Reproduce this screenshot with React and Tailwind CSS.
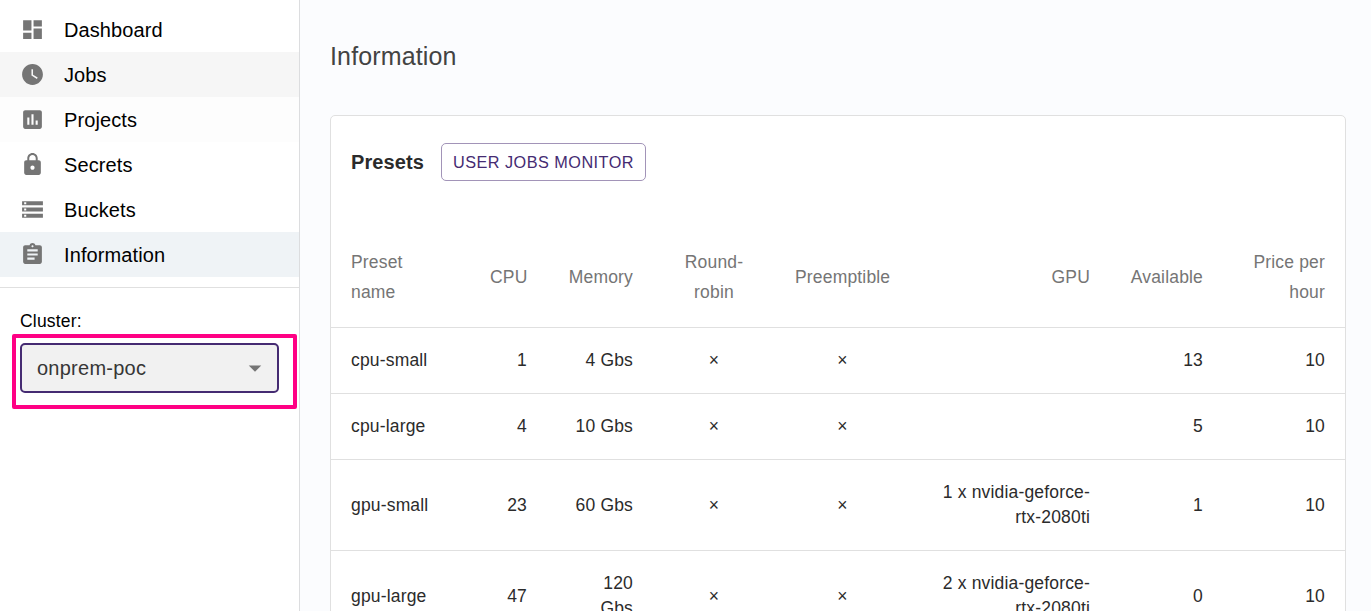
import React from "react";
import {
  MdDashboard,
  MdWatchLater,
  MdAssessment,
  MdLock,
  MdStorage,
  MdAssignment,
  MdArrowDropDown,
} from "react-icons/md";

const navItems = [
  { label: "Dashboard", Icon: MdDashboard, bg: "bg-white" },
  { label: "Jobs", Icon: MdWatchLater, bg: "bg-[#f6f6f6]" },
  { label: "Projects", Icon: MdAssessment, bg: "bg-[#fdfdfd]" },
  { label: "Secrets", Icon: MdLock, bg: "bg-white" },
  { label: "Buckets", Icon: MdStorage, bg: "bg-white" },
  { label: "Information", Icon: MdAssignment, bg: "bg-[#eff3f6]" },
];

const columns = [
  { label: "Preset name", width: "w-[139px]", align: "text-left" },
  { label: "CPU", width: "w-[77px]", align: "text-right" },
  { label: "Memory", width: "w-[106px]", align: "text-right" },
  { label: "Round-robin", width: "w-[122px]", align: "text-center" },
  { label: "Preemptible", width: "w-[135px]", align: "text-center" },
  { label: "GPU", width: "w-[200px]", align: "text-right" },
  { label: "Available", width: "w-[113px]", align: "text-right" },
  { label: "Price per hour", width: "w-[122px]", align: "text-right" },
];

const rows = [
  ["cpu-small", "1", "4 Gbs", "×", "×", "", "13", "10"],
  ["cpu-large", "4", "10 Gbs", "×", "×", "", "5", "10"],
  ["gpu-small", "23", "60 Gbs", "×", "×", "1 x nvidia-geforce-rtx-2080ti", "1", "10"],
  ["gpu-large", "47", "120 Gbs", "×", "×", "2 x nvidia-geforce-rtx-2080ti", "0", "10"],
];

function Sidebar() {
  return (
    <aside className="flex w-[300px] shrink-0 flex-col border-r border-[#dcdddf] bg-white">
      <nav className="border-b border-[#e0e0e0] pt-[7px] pb-[10px]">
        {navItems.map(({ label, Icon, bg }) => (
          <a key={label} className={`flex h-[45px] items-center gap-[19px] pl-5 text-xl text-black ${bg}`}>
            <Icon className="size-[25px] text-[#757575]" />
            <span className="tracking-[0.1px]">{label}</span>
          </a>
        ))}
      </nav>
      <div className="flex flex-col pt-[21px]">
        <label className="pl-5 text-[17.5px] leading-[25px] tracking-[0.19px] text-black">Cluster:</label>
        <div className="ml-[12px] h-[75px] w-[284.5px] rounded-[2px] border-4 border-[#ff0084] pt-[5px] pl-1">
          <button className="flex h-[50px] w-[259px] items-center justify-between rounded-[5px] border-2 border-[#452b72] bg-[#f1f1f1] pr-[7px] pl-[15px] text-xl tracking-[0.25px] text-[#363636]">
            onprem-poc
            <MdArrowDropDown className="size-[30px] text-[#757575]" />
          </button>
        </div>
      </div>
    </aside>
  );
}

function PresetsCard() {
  return (
    <section className="w-[1016px] rounded-[5px] border border-[#e0e0e0] bg-white">
      <header className="flex h-[111px] items-start px-5 pt-[27px]">
        <h2 className="w-[90px] text-xl leading-[38px] font-bold tracking-[0.12px] text-[#2b2b2b]">Presets</h2>
        <button className="h-[38px] w-[205px] rounded-[5px] border border-[#a294b8] text-center text-[16.25px] tracking-[0.47px] whitespace-nowrap text-[#452b72]">
          USER JOBS MONITOR
        </button>
      </header>
      <table className="w-[1014px] table-fixed border-separate border-spacing-0 text-[17.5px] tracking-[0.17px]">
        <thead>
          <tr>
            {columns.map((c) => (
              <th
                key={c.label}
                className={`border-b border-[#e0e0e0] p-5 leading-[30px] font-normal text-[#757575] ${c.width} ${c.align}`}
              >
                {c.label}
              </th>
            ))}
          </tr>
        </thead>
        <tbody>
          {rows.map((row) => (
            <tr key={row[0]}>
              {row.map((cell, i) => (
                <td
                  key={columns[i].label}
                  className={`border-b border-[#e0e0e0] p-5 leading-[25px] text-[#2b2b2b] ${columns[i].align}`}
                >
                  {cell}
                </td>
              ))}
            </tr>
          ))}
        </tbody>
      </table>
    </section>
  );
}

export default function App() {
  return (
    <div className="flex h-[611px] w-[1371px] overflow-hidden bg-[#fbfcfe] font-['Liberation_Sans',Arial,sans-serif]">
      <Sidebar />
      <main className="min-w-0 flex-1 pt-[36px] pl-[30px]">
        <h1 className="mb-[39px] text-[25px] leading-[40px] tracking-[0.14px] text-[#434343]">Information</h1>
        <PresetsCard />
      </main>
    </div>
  );
}
